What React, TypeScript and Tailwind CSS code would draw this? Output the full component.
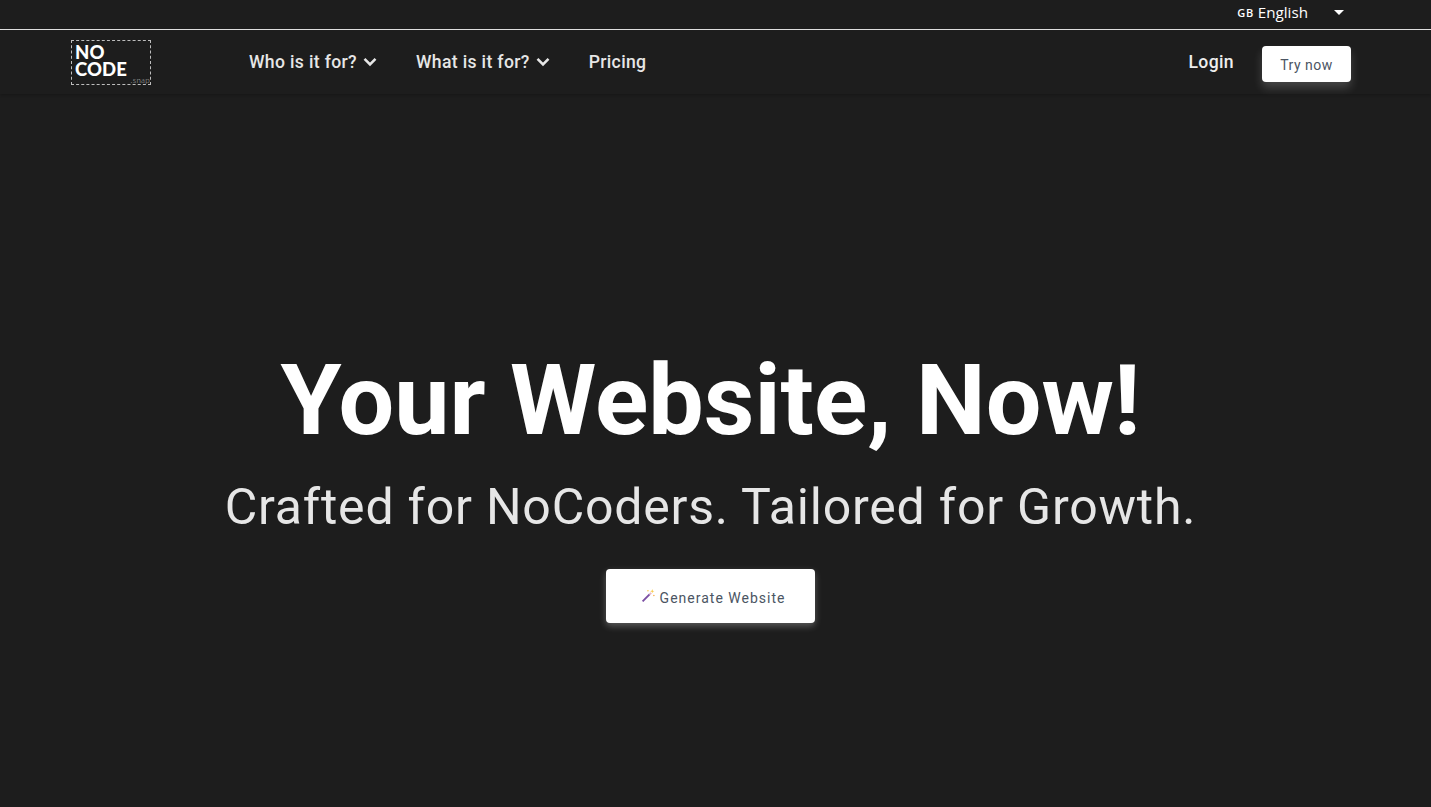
import React from "react";

function Chevron() {
  return (
    <svg width="14" height="14" viewBox="0 0 14 14" fill="none" stroke="currentColor" strokeWidth="2.6">
      <path d="M1.5 3.8 L7 9.3 L12.5 3.8" />
    </svg>
  );
}

function Wand() {
  return (
    <svg width="15" height="15" viewBox="0 0 14 14" className="mr-[4px] -mt-[6px]">
      <path d="M1.5 12.5 L8 6" stroke="#7b4fa3" strokeWidth="1.8" />
      <path d="M8 6 L9.5 4.5" stroke="#e8b7c8" strokeWidth="1.8" />
      <path d="M10.5 1 l.5 1.5 1.5 .5 -1.5 .5 -.5 1.5 -.5 -1.5 -1.5 -.5 1.5 -.5z" fill="#f7c948" />
      <circle cx="6.5" cy="2.5" r=".7" fill="#f7c948" />
      <circle cx="12" cy="7" r=".7" fill="#f7a948" />
    </svg>
  );
}

export default function App() {
  return (
    <div className="h-[807px] overflow-hidden bg-[#1d1d1d] flex flex-col font-['Roboto',sans-serif]">
      <div className="h-[30px] shrink-0 border-b border-[#e8e8e8] flex items-center justify-end pr-[87px]">
        <div className="flex items-center text-white -mt-[5px]">
          <span className="text-[11px] font-['Open_Sans',sans-serif] font-semibold tracking-[0.6px] mt-[3px] mr-[4px]">GB</span>
          <span className="text-[15.2px] leading-[20px] font-['Open_Sans',sans-serif]">English</span>
          <span className="ml-[26px] w-0 h-0 border-l-[5.5px] border-r-[5.5px] border-t-[5.5px] border-l-transparent border-r-transparent border-t-white" />
        </div>
      </div>

      <nav className="h-[64px] shrink-0 flex items-center pl-[71px] pr-[80px] shadow-[0_1px_3px_rgba(0,0,0,0.25)]">
        <div className="relative w-[80px] h-[45px] border border-dashed border-[#bdbdbd]">
          <div className="w-fit font-['Lato',sans-serif] font-black text-white text-[18.5px] leading-[17px] pt-[3px] pl-[3px] tracking-[0.1px]">
            NO<br />CODE
          </div>
          <span className="absolute right-[0px] bottom-[0px] font-['Lato',sans-serif] text-[8px] leading-[8px] font-light text-[#bbbbbb] tracking-[0.3px]">.snap</span>
        </div>

        <div className="ml-[98px] flex items-center text-[#e6e6e6] text-[17.6px] font-medium tracking-[0.34px] mt-[1px]">
          <span className="flex items-center gap-[6px]">Who is it for?<Chevron /></span>
          <span className="ml-[39px] flex items-center gap-[6px]">What is it for?<Chevron /></span>
          <span className="ml-[39px]">Pricing</span>
        </div>

        <div className="ml-auto flex items-center">
          <span className="text-[#eeeeee] text-[17.6px] font-medium tracking-[0.36px]">Login</span>
          <button className="ml-[28px] w-[89px] h-[36px] mt-[4px] bg-white rounded-[4px] text-[#4b5563] text-[14px] tracking-[0.5px] pt-[2px] shadow-[0_6px_10px_rgba(255,255,255,0.18)]">Try now</button>
        </div>
      </nav>

      <main className="flex-1 flex flex-col items-center pr-[10px]">
        <h1 className="mt-[250px] text-white text-[98.7px] leading-[112px] font-bold">Your Website, Now!</h1>
        <h2 className="mt-[21px] text-[#e6e6e6] text-[50px] leading-[60px] font-normal tracking-[0.78px]">Crafted for NoCoders. Tailored for Growth.</h2>
        <button className="mt-[32px] w-[209px] h-[54px] bg-white rounded-[4px] flex items-center justify-center text-[#4b5563] text-[14px] tracking-[1px] pt-[5px] pl-[5px] shadow-[0_3px_7px_rgba(255,255,255,0.28)]">
          <Wand />
          Generate Website
        </button>
      </main>
    </div>
  );
}
